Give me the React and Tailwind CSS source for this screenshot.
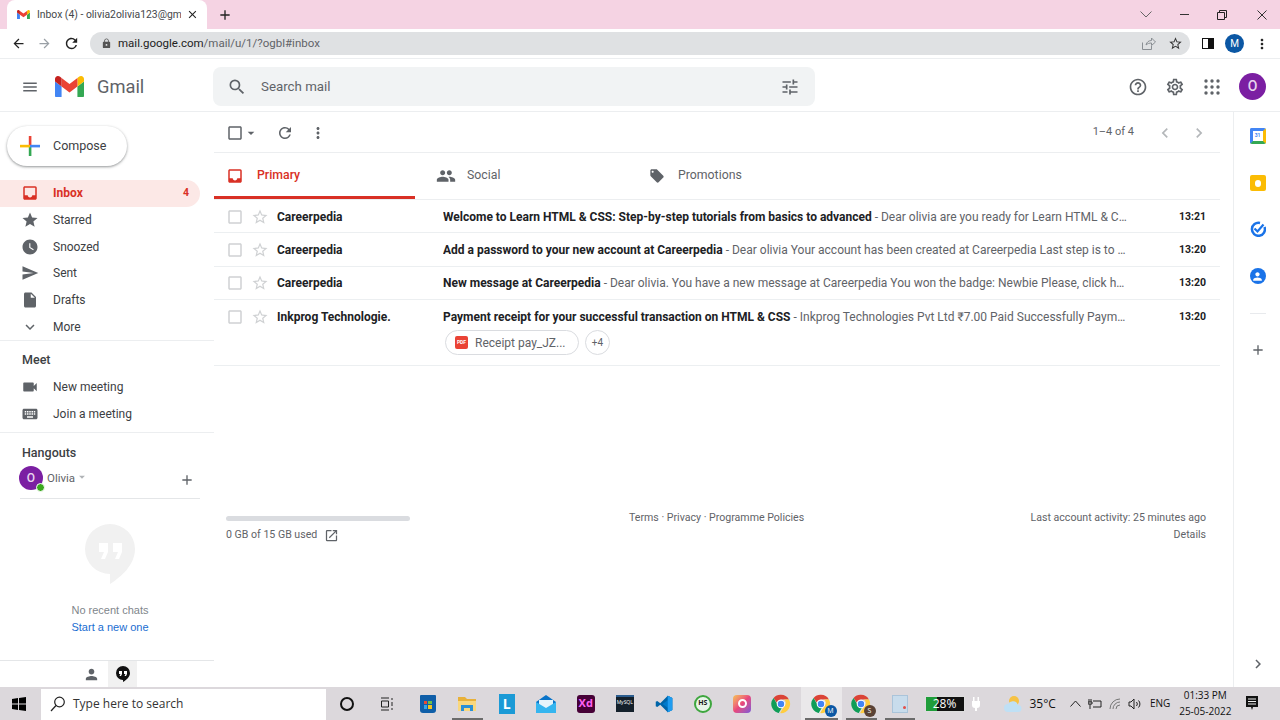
import React from "react";
import {
  MdInbox, MdStar, MdWatchLater, MdSend, MdInsertDriveFile, MdExpandMore, MdVideocam, MdKeyboard,
  MdMenu, MdSearch, MdTune, MdHelpOutline, MdOutlineSettings, MdPeople, MdLocalOffer,
  MdCheckBoxOutlineBlank, MdRefresh, MdMoreVert, MdArrowDropDown, MdChevronLeft, MdChevronRight,
  MdOpenInNew, MdAdd, MdPerson, MdArrowBack, MdArrowForward, MdLock, MdClose, MdOutlineStarBorder,
} from "react-icons/md";

const GmailLogo = ({ w = 30 }) => (
  <svg width={w} viewBox="52 42 88 66">
    <path fill="#4285f4" d="M58 108h14V74L52 59v43c0 3.32 2.69 6 6 6" />
    <path fill="#34a853" d="M120 108h14c3.32 0 6-2.69 6-6V59l-20 15" />
    <path fill="#fbbc04" d="M120 48v26l20-15v-8c0-7.42-8.47-11.65-14.4-7.2" />
    <path fill="#ea4335" d="M72 74V48l24 18 24-18v26L96 92" />
    <path fill="#c5221f" d="M52 51v8l20 15V48l-5.6-4.2c-5.94-4.45-14.4-.22-14.4 7.2" />
  </svg>
);

const Apps = () => (
  <svg width="16" height="16" viewBox="0 0 16 16" fill="#5f6368">
    {[2, 8, 14].map((y) => [2, 8, 14].map((x) => <circle key={`${x}-${y}`} cx={x} cy={y} r="1.7" />))}
  </svg>
);

const Chrome = ({ s = 20 }) => (
  <svg width={s} height={s} viewBox="0 0 48 48">
    <path fill="#db4437" d="M24 2a22 22 0 0 1 19 11H24a11 11 0 0 0-10.4 7.5L6.2 9.6A22 22 0 0 1 24 2z" />
    <path fill="#0f9d58" d="M24 46A22 22 0 0 1 6.2 9.6l9.4 16.3A9 9 0 0 0 26 33l-7.4 12.3A22 22 0 0 1 24 46z" />
    <path fill="#ffcd40" d="M43 13a22 22 0 0 1-19 33l-2-.2L33 27a9 9 0 0 0-2-14z" />
    <circle cx="24" cy="24" r="9" fill="#4285f4" stroke="#fff" strokeWidth="2.5" />
  </svg>
);

const ComposePlus = () => (
  <svg width="20" height="20" viewBox="0 0 20 20">
    <rect x="8.8" y="0" width="2.6" height="10" fill="#ea4335" />
    <rect x="8.8" y="10" width="2.6" height="10" fill="#34a853" />
    <rect x="0" y="8.8" width="10" height="2.6" fill="#fbbc04" />
    <rect x="10" y="8.8" width="10" height="2.6" fill="#4285f4" />
  </svg>
);

const navItems = [
  { icon: MdStar, label: "Starred" },
  { icon: MdWatchLater, label: "Snoozed" },
  { icon: MdSend, label: "Sent" },
  { icon: MdInsertDriveFile, label: "Drafts" },
  { icon: MdExpandMore, label: "More" },
];

function NavRow({ icon: Icon, label }) {
  return (
    <div className="h-[26.67px] flex items-center pl-[21px] text-[12px] text-[#3c4043]">
      <Icon className="text-[#5f6368] w-[18px] h-[18px]" />
      <span className="ml-[14px]">{label}</span>
    </div>
  );
}

const emails = [
  {
    from: "Careerpedia",
    subject: "Welcome to Learn HTML & CSS: Step-by-step tutorials from basics to advanced",
    snippet: " - Dear olivia are you ready for Learn HTML & CSS with our complete course today",
    time: "13:21",
  },
  {
    from: "Careerpedia",
    subject: "Add a password to your new account at Careerpedia",
    snippet: " - Dear olivia Your account has been created at Careerpedia Last step is to set your password now please",
    time: "13:20",
  },
  {
    from: "Careerpedia",
    subject: "New message at Careerpedia",
    snippet: " - Dear olivia. You have a new message at Careerpedia You won the badge: Newbie Please, click here to view the message now",
    time: "13:20",
  },
  {
    from: "Inkprog Technologie.",
    subject: "Payment receipt for your successful transaction on HTML & CSS",
    snippet: " - Inkprog Technologies Pvt Ltd ₹7.00 Paid Successfully Payment Details and more here",
    time: "13:20",
    attach: true,
  },
];

function EmailRow({ from, subject, snippet, time, attach }) {
  return (
    <div className="border-b border-[#eceff1] flex flex-col">
      <div className="h-[32.33px] flex items-center pl-[12px] pr-[14px] pt-[1px]">
        <MdCheckBoxOutlineBlank className="w-[18px] h-[18px] text-[#cfd1d3] shrink-0" />
        <MdOutlineStarBorder className="w-[18px] h-[18px] text-[#cfd1d3] shrink-0 ml-[7px]" />
        <span className="w-[166px] ml-[8px] shrink-0 text-[12px] font-bold text-[#202124] truncate">{from}</span>
        <div className="w-[685px] shrink-0 truncate text-[12px] text-[#5f6368]">
          <span className="font-bold text-[#202124]">{subject}</span>
          {snippet}
        </div>
        <span className="ml-auto text-[10.5px] font-bold text-[#202124]">{time}</span>
      </div>
      {attach && (
        <div className="flex items-start gap-[6px] pl-[231px] h-[35px] -mt-[2px]">
          <div className="w-[134px] h-[25px] rounded-full border border-[#dadce0] flex items-center pl-[9px] text-[12px] text-[#5f6368]">
            <span className="w-[13px] h-[13px] rounded-[2px] bg-[#ea4335] text-white text-[5px] font-bold flex items-center justify-center">PDF</span>
            <span className="ml-[7px]">Receipt pay_JZ...</span>
          </div>
          <div className="w-[25px] h-[25px] rounded-full border border-[#dadce0] flex items-center justify-center text-[10px] text-[#5f6368]">+4</div>
        </div>
      )}
    </div>
  );
}

const Slot = ({ children, active, bar, w = "w-[39.5px]" }) => (
  <div className={`${w} h-full shrink-0 flex items-center justify-center relative ${active ? "bg-[#eae8ea]" : ""}`}>
    {children}
    {bar && <span className="absolute bottom-0 left-[4px] right-[4px] h-[2px] bg-[#6b6b6b]" />}
  </div>
);

const Badge = ({ color, letter }) => (
  <span className="absolute right-[5px] bottom-[3px] w-[12px] h-[12px] rounded-full text-white text-[7px] flex items-center justify-center" style={{ background: color }}>
    {letter}
  </span>
);

function Taskbar() {
  return (
    <div className="h-[33px] shrink-0 bg-[#dcd8dc] flex items-stretch font-['Open_Sans',sans-serif] text-[#111]">
      <div className="w-[38px] flex items-center justify-center">
        <svg width="14" height="14" viewBox="0 0 14 14" fill="#000">
          <path d="M0 2l6-.9V6.6H0zM7 1L14 0v6.6H7zM0 7.4h6v5.5l-6-.9zM7 7.4h7V14l-7-1z" />
        </svg>
      </div>
      <div className="ml-[3px] w-[285px] h-[31px] mt-[2px] pb-[1px] bg-white flex items-center pl-[9px] text-[12px] text-[#333]">
        <svg width="16" height="16" viewBox="0 0 16 16" fill="none" stroke="#222" strokeWidth="1.2">
          <circle cx="9.5" cy="6" r="4.8" />
          <path d="M6 9.5L1 15" />
        </svg>
        <span className="ml-[7px]">Type here to search</span>
      </div>
      <div className="flex items-center h-full pl-[1px]">
        <Slot><span className="w-[14px] h-[14px] rounded-full border-2 border-[#111]" /></Slot>
        <Slot w="w-[41.5px]">
          <svg width="14" height="14" viewBox="0 0 14 14" fill="none" stroke="#222">
            <path d="M1 1h8M1 13h8M1.5 4h7v6h-7zM12 1v2M12 5v4M12 11v2" />
          </svg>
        </Slot>
        <Slot>
          <span className="w-[16px] h-[18px] rounded-b-[3px] rounded-t-[1px] bg-[#0f5ea8] grid grid-cols-2 gap-[1px] p-[4px] pt-[6px]">
            <i className="bg-[#e94b35]" /><i className="bg-[#6cc04a]" /><i className="bg-[#35a5e8]" /><i className="bg-[#f5c51b]" />
          </span>
        </Slot>
        <Slot bar>
          <svg width="18" height="16" viewBox="0 0 18 16">
            <path fill="#e8b13a" d="M0 1h7l2 2h9v12H0z" />
            <path fill="#f9d77e" d="M0 5h18v10H0z" />
            <path fill="#2a8fd6" d="M3 9h12v6h-3v-3H6v3H3z" />
          </svg>
        </Slot>
        <Slot>
          <span className="w-[16px] h-[20px] bg-[#1b9ad6] flex items-center justify-center text-white text-[14px] font-bold">L</span>
        </Slot>
        <Slot>
          <svg width="20" height="18" viewBox="0 0 20 18">
            <path fill="#0a74c9" d="M0 7l10-7 10 7v11H0z" />
            <path fill="#e6f4fb" d="M3 5h14v6l-7 4-7-4z" />
            <path fill="#35b5ef" d="M0 7l10 6 10-6v11H0z" />
          </svg>
        </Slot>
        <Slot>
          <span className="w-[18px] h-[18px] rounded-[3px] bg-[#470137] flex items-center justify-center text-[#ff61f6] text-[11px] font-bold">Xd</span>
        </Slot>
        <Slot w="w-[38.5px]">
          <span className="w-[18px] h-[17px] bg-[#14202b] border-t-2 border-[#2b5d8f] text-white text-[5px] leading-[10px] text-center">MySQL</span>
        </Slot>
        <Slot w="w-[39px]">
          <svg width="18" height="18" viewBox="0 0 24 24">
            <path fill="#0065a9" d="M17 1l6 3v16l-6 3L7 13l-4 3-2-1V9l2-1 4 3z" />
            <path fill="#007acc" d="M17 1l6 3v16l-6 3V7l-7 5 7 5" />
            <path fill="#1f9cf0" d="M17 1l6 3v16l-6 3z" />
          </svg>
        </Slot>
        <Slot>
          <span className="w-[18px] h-[18px] rounded-full bg-[#e8f5e9] border-2 border-[#3ea63e] flex items-center justify-center text-[7px] font-bold text-[#1a1a1a]">HS</span>
        </Slot>
        <Slot>
          <span className="w-[18px] h-[18px] rounded-[4px] bg-gradient-to-br from-[#f5c14d] via-[#e8467c] to-[#7b52d9] flex items-center justify-center">
            <span className="w-[9px] h-[9px] rounded-full border-2 border-white" />
          </span>
        </Slot>
        <Slot w="w-[38.5px]"><Chrome /></Slot>
        <Slot active bar w="w-[41px]"><Chrome /><Badge color="#0b57a4" letter="M" /></Slot>
        <Slot bar w="w-[39px]"><Chrome /><Badge color="#5a4235" letter="S" /></Slot>
        <Slot bar w="w-[38px]">
          <span className="w-[16px] h-[18px] bg-[#c8dcec] border border-[#aac4da] relative">
            <span className="absolute right-[1px] bottom-[3px] w-[3px] h-[3px] rounded-full bg-[#e2504a]" />
          </span>
        </Slot>
      </div>
      <div className="flex items-center h-full ml-[6px]">
        <div className="w-[40px] h-[16px] border border-[#ddd] bg-[#111] flex items-center relative">
          <span className="w-[11px] h-full bg-[#1f9d3a]" />
          <span className="absolute inset-0 text-center text-[12px] leading-[14px] text-white">28%</span>
        </div>
        <svg className="ml-[6px]" width="10" height="14" viewBox="0 0 10 14" fill="#fff">
          <path d="M2 0h1.5v4H2zM6.5 0H8v4H6.5zM1 4h8v4a3 3 0 0 1-3 3v3H4v-3a3 3 0 0 1-3-3z" />
        </svg>
        <svg className="ml-[22px]" width="20" height="18" viewBox="0 0 20 18">
          <circle cx="11" cy="6" r="5" fill="#f6c244" />
          <path fill="#bfe0f5" d="M5 17a4 4 0 0 1 0-8 5.5 5.5 0 0 1 10 1 3.5 3.5 0 0 1 0 7z" />
        </svg>
        <span className="ml-[7px] text-[12px]">35°C</span>
        <svg className="ml-[14px]" width="11" height="7" viewBox="0 0 11 7" fill="none" stroke="#222"><path d="M.5 6.5l5-5.5 5 5.5" /></svg>
        <svg className="ml-[7px]" width="14" height="12" viewBox="0 0 14 12" fill="none" stroke="#222"><path d="M1 1v3M3 1v3M0 4h4v2H0zM2 6v5M5 3h8v6H5" /></svg>
        <svg className="ml-[7px]" width="14" height="12" viewBox="0 0 14 12" fill="none" stroke="#777"><path d="M1 11a10 10 0 0 1 10-10M4 11a7 7 0 0 1 7-7M7 11a4 4 0 0 1 4-4" /></svg>
        <svg className="ml-[5px]" width="14" height="12" viewBox="0 0 14 12" fill="none" stroke="#222"><path d="M1 4h2l3-3v10L3 8H1zM8.5 4a3 3 0 0 1 0 4M10.5 2.5a5 5 0 0 1 0 7" /></svg>
        <span className="ml-[8px] text-[10px]">ENG</span>
        <div className="ml-[9px] w-[52px] flex flex-col items-center whitespace-nowrap text-[10px] leading-[16px] pb-[1px]">
          <span>01:33 PM</span>
          <span>25-05-2022</span>
        </div>
        <svg className="ml-[14px]" width="14" height="15" viewBox="0 0 14 15" fill="#111">
          <path d="M1 0h12v11H8l-1 3-1-3H1z" />
          <path stroke="#eee" d="M3 3h8M3 5.5h8M3 8h8" />
        </svg>
      </div>
    </div>
  );
}

export default function App() {
  return (
    <div className="w-[1280px] h-[720px] overflow-hidden flex flex-col bg-white font-['Roboto',sans-serif]">
      {/* Chrome tab strip */}
      <div className="h-[29px] shrink-0 bg-[#f5d3e3] flex items-end pl-[7px] font-['Roboto',sans-serif]">
        <div className="w-[200px] h-[29px] bg-white rounded-t-[8px] flex items-center pl-[10px] pr-[8px]">
          <GmailLogo w={13} />
          <span className="ml-[7px] w-[145px] overflow-hidden whitespace-nowrap text-[10.4px] text-[#45474a]">Inbox (4) - olivia2olivia123@gma</span>
          <MdClose className="ml-[5px] w-[13px] h-[13px] text-[#222]" />
        </div>
        <div className="h-[29px] flex items-center ml-[10px]">
          <MdAdd className="w-[16px] h-[16px] text-[#222]" />
        </div>
        <div className="ml-auto h-[29px] flex items-center text-[#333]">
          <svg className="mr-[28px]" width="12" height="7" viewBox="0 0 12 7" fill="none" stroke="#666"><path d="M.5.5l5.500 5.500 5.500-5.500" /></svg>
          <span className="w-[9px] h-px bg-[#333] mr-[28px]" />
          <svg className="mr-[30px]" width="10" height="10" viewBox="0 0 10 10" fill="none" stroke="#222"><path d="M.5 2.5h7v7h-7zM2.5 2.5v-2h7v7h-2" /></svg>
          <svg className="mr-[13px]" width="10" height="10" viewBox="0 0 10 10" stroke="#333"><path d="M.5.5l9 9M9.5.5l-9 9" /></svg>
        </div>
      </div>
      {/* Chrome toolbar */}
      <div className="h-[30px] shrink-0 bg-white border-b-[1px] border-[#eceef0] flex items-center pl-[11px] pr-[10px]">
        <MdArrowBack className="w-[15px] h-[15px] text-[#222]" />
        <MdArrowForward className="w-[15px] h-[15px] text-[#9aa0a6] ml-[11px]" />
        <MdRefresh className="w-[17px] h-[17px] text-[#222] ml-[11px]" />
        <div className="ml-[10px] w-[1100px] h-[23px] rounded-full bg-[#dfe1e3] flex items-center pl-[11px] pr-[7px] text-[11.5px]">
          <MdLock className="w-[11px] h-[11px] text-[#555]" />
          <span className="ml-[6px] text-[#222]">mail.google.com</span>
          <span className="text-[#5f6368]">/mail/u/1/?ogbl#inbox</span>
          <svg className="ml-auto" width="14" height="13" viewBox="0 0 14 13" fill="none" stroke="#8a8f94"><path d="M.5 5.5v7h9V9M4 8c.5-3 3-4.500 5.500-4.500V1L13.500 5 9.500 8.500V6C7.500 6 5.500 6.500 4 8z" /></svg>
          <MdOutlineStarBorder className="ml-[12px] w-[15px] h-[15px] text-[#333]" />
        </div>
        <span className="ml-[12px] w-[12px] h-[11px] border-[1.5px] border-[#111] bg-gradient-to-r from-white from-50% to-[#111] to-50%" />
        <span className="ml-[11px] w-[19px] h-[19px] rounded-full bg-[#0b57a4] text-white text-[10px] flex items-center justify-center">M</span>
        <MdMoreVert className="ml-[10px] w-[16px] h-[16px] text-[#222]" />
      </div>
      {/* Gmail header */}
      <div className="h-[53px] shrink-0 border-b border-[#eceef0] flex items-center pt-[3px]">
        <div className="w-[213px] flex items-center pl-[21px]">
          <MdMenu className="w-[18px] h-[18px] text-[#5f6368]" />
          <span className="ml-[16px]"><GmailLogo w={29} /></span>
          <span className="ml-[13px] text-[18.3px] text-[#5f6368]">Gmail</span>
        </div>
        <div className="w-[602px] h-[39px] rounded-[8px] bg-[#f1f3f4] flex items-center pl-[14px] pr-[15px]">
          <MdSearch className="w-[20px] h-[20px] text-[#5f6368]" />
          <span className="ml-[14px] text-[13.3px] text-[#5f6368]">Search mail</span>
          <MdTune className="ml-auto w-[20px] h-[20px] text-[#5f6368]" />
        </div>
        <div className="ml-auto flex items-center pr-[14px]">
          <MdHelpOutline className="w-[20px] h-[20px] text-[#5f6368]" />
          <MdOutlineSettings className="ml-[17px] w-[20px] h-[20px] text-[#5f6368]" />
          <span className="ml-[19px]"><Apps /></span>
          <span className="ml-[19px] w-[27px] h-[27px] rounded-full bg-[#7b1fa2] text-[#e8d5ee] text-[14px] font-medium flex items-center justify-center">O</span>
        </div>
      </div>

      <div className="flex-1 min-h-0 flex">
        {/* Sidebar */}
        <aside className="w-[214px] shrink-0 flex flex-col">
          <div className="h-[68px] shrink-0 pt-[14px] pl-[7px]">
            <div className="w-[120px] h-[40px] rounded-full bg-white shadow-[0_1px_3px_rgba(60,64,67,.4),0_1px_2px_rgba(60,64,67,.2)] flex items-center pl-[13px] text-[12.5px] text-[#3c4043]">
              <ComposePlus />
              <span className="ml-[13px]">Compose</span>
            </div>
          </div>
          <div className="h-[26.67px] w-[200px] shrink-0 rounded-r-full bg-[#fce8e6] flex items-center pl-[21px] pr-[11px] text-[#d93025] text-[12px] font-bold">
            <MdInbox className="w-[18px] h-[18px]" />
            <span className="ml-[14px]">Inbox</span>
            <span className="ml-auto text-[10.5px]">4</span>
          </div>
          {navItems.map((n) => <NavRow key={n.label} {...n} />)}
          <div className="h-[1px] shrink-0 border-b border-[#eceef0]" />
          <div className="h-[33px] shrink-0 pl-[22px] flex items-end pb-[4.5px] text-[12.5px] font-medium text-[#3c4043]">Meet</div>
          <NavRow icon={MdVideocam} label="New meeting" />
          <NavRow icon={MdKeyboard} label="Join a meeting" />
          <div className="h-[6px] shrink-0 border-b border-[#eceef0]" />
          <div className="h-[30px] shrink-0 pl-[22px] flex items-end pb-[.5px] text-[12.5px] font-medium text-[#3c4043]">Hangouts</div>
          <div className="ml-[20px] mr-[14px] h-[36px] shrink-0 border-b border-[#e4e6e8] flex items-start">
            <span className="relative -ml-[1px] mt-[3px] w-[24px] h-[24px] rounded-full bg-[#7b1fa2] text-[#e8d5ee] text-[12px] font-medium flex items-center justify-center">
              O
              <span className="absolute left-[17px] top-[17px] w-[9px] h-[9px] rounded-full bg-[#3aa81e] border border-white" />
            </span>
            <span className="ml-[4px] mt-[6.5px] text-[11.5px] text-[#5f6368]">Olivia</span>
            <MdArrowDropDown className="mt-[7px] w-[14px] h-[14px] text-[#b0b3b6]" />
            <MdAdd className="ml-auto mt-[9px] mr-[5px] w-[16px] h-[16px] text-[#5f6368]" />
          </div>
          <div className="flex-1 flex flex-col items-center pl-[6px] pt-[25px]">
            <svg width="50" height="60" viewBox="0 0 50 60">
              <path fill="#f1f1f1" d="M25 0a25 25 0 0 1 25 25c0 16-14 28-25 35V50A25 25 0 0 1 25 0z" />
              <path fill="#fff" d="M14 19h9v9l-3 7h-4l3-7h-5zM28 19h9v9l-3 7h-4l3-7h-5z" />
            </svg>
            <span className="mt-[18px] text-[11px] text-[#80868b] font-['Liberation_Sans',sans-serif]">No recent chats</span>
            <span className="text-[11px] text-[#1a6dd1] font-['Liberation_Sans',sans-serif]">Start a new one</span>
          </div>
          <div className="h-[27px] shrink-0 border-t border-[#e4e6e8] flex pl-[76px]">
            <span className="w-[30px] flex items-center justify-center"><MdPerson className="w-[17px] h-[17px] text-[#5f6368]" /></span>
            <span className="ml-[2px] w-[29px] bg-[#f1f1f1] flex items-center justify-center">
              <svg width="14" height="16" viewBox="0 0 14 16">
                <path fill="#111" d="M7 0a7 7 0 0 1 7 7c0 4-3.500 7-7 9v-2A7 7 0 0 1 7 0z" />
                <path fill="#fff" d="M3 5h3v3l-1 2H3.500l1-2H3zM8 5h3v3l-1 2H8.500l1-2H8z" />
              </svg>
            </span>
          </div>
        </aside>

        {/* Main */}
        <main className="w-[1006px] shrink-0 flex flex-col text-[#5f6368]">
          <div className="h-[41px] shrink-0 border-b border-[#eceef0] flex items-center pl-[12px] pr-[11px] pt-[1px]">
            <MdCheckBoxOutlineBlank className="w-[18px] h-[18px] text-[#5f6368]" />
            <MdArrowDropDown className="w-[16px] h-[16px] text-[#5f6368] -ml-[1px]" />
            <MdRefresh className="ml-[17px] w-[18px] h-[18px] text-[#5f6368]" />
            <MdMoreVert className="ml-[15px] w-[18px] h-[18px] text-[#5f6368]" />
            <span className="ml-auto text-[11px]">1–4 of 4</span>
            <MdChevronLeft className="ml-[21px] w-[20px] h-[20px] text-[#b4b7ba]" />
            <MdChevronRight className="ml-[14px] w-[20px] h-[20px] text-[#b4b7ba]" />
          </div>
          <div className="h-[47px] shrink-0 border-b border-[#eceef0] flex text-[12.3px]">
            <div className="w-[201px] h-[46px] border-b-[3px] border-[#d93025] flex items-center pl-[12px] pt-[2px] text-[#d93025] font-medium">
              <MdInbox className="w-[18px] h-[18px]" />
              <span className="ml-[13px]">Primary</span>
            </div>
            <div className="w-[234px] flex items-center pl-[21px] pb-[1px]">
              <MdPeople className="w-[20px] h-[20px]" />
              <span className="ml-[11px]">Social</span>
            </div>
            <div className="flex items-center pb-[1px]">
              <MdLocalOffer className="w-[16px] h-[16px]" />
              <span className="ml-[13px]">Promotions</span>
            </div>
          </div>
          {emails.map((e, i) => <EmailRow key={i} {...e} />)}
          <div className="flex items-start pt-[150px] pl-[12px] pr-[14px] text-[10.6px]">
            <div className="w-[184px]">
              <div className="h-[5px] rounded-full bg-[#dadce0]" />
              <div className="flex items-center mt-[6px]">
                <span>0 GB of 15 GB used</span>
                <MdOpenInNew className="ml-[7px] w-[15px] h-[15px]" />
              </div>
            </div>
            <span className="-mt-[6px] ml-[219px]">Terms · Privacy · Programme Policies</span>
            <div className="ml-auto flex flex-col items-end gap-[1px] -mt-[6px]">
              <span>Last account activity: 25 minutes ago</span>
              <span>Details</span>
            </div>
          </div>
        </main>

        {/* Side panel */}
        <div className="w-[13px] shrink-0" />
        <div className="w-[47px] shrink-0 border-l border-[#eceef0] flex flex-col items-center pl-[1px] pt-[16px]">
          <span className="w-[16px] h-[16px] rounded-[2px] bg-white border-[3px] border-t-[#4285f4] border-l-[#4285f4] border-b-[#34a853] border-r-[#fbbc04] flex items-center justify-center text-[5px] text-[#4285f4] font-bold">31</span>
          <span className="mt-[31px] w-[16px] h-[16px] rounded-[2px] bg-[#fbbc04] flex items-center justify-center">
            <span className="w-[6px] h-[7px] rounded-full bg-white" />
          </span>
          <svg className="mt-[30px]" width="16" height="16" viewBox="0 0 16 16" fill="none">
            <path d="M14.500 6A6.500 6.500 0 1 1 10 2" stroke="#1a73e8" strokeWidth="2.500" />
            <path d="M4.500 7.500l3 3 6-7" stroke="#1a73e8" strokeWidth="2.200" />
          </svg>
          <span className="mt-[31px] w-[16px] h-[16px] rounded-full bg-[#1a73e8] flex items-center justify-center">
            <MdPerson className="w-[13px] h-[13px] text-white" />
          </span>
          <span className="mt-[29px] w-[16px] h-px bg-[#e8eaed]" />
          <MdAdd className="mt-[28px] w-[16px] h-[16px] text-[#5f6368]" />
          <MdChevronRight className="mt-auto mb-[14px] w-[18px] h-[18px] text-[#5f6368]" />
        </div>
      </div>
      <Taskbar />
    </div>
  );
}
